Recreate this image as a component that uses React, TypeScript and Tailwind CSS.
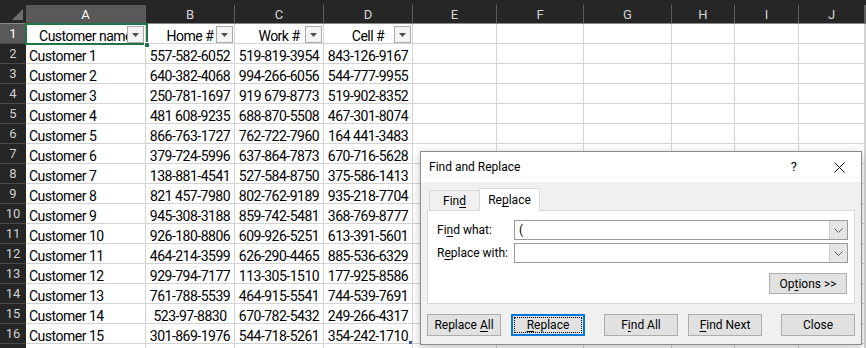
import React from 'react';

const COLS = ['A', 'B', 'C', 'D', 'E', 'F', 'G', 'H', 'I', 'J', ''];

const DATA: string[][] = [
  ['Customer name', 'Home #', 'Work #', 'Cell #'],
  ['Customer 1', '557-582-6052', '519-819-3954', '843-126-9167'],
  ['Customer 2', '640-382-4068', '994-266-6056', '544-777-9955'],
  ['Customer 3', '250-781-1697', '919 679-8773', '519-902-8352'],
  ['Customer 4', '481 608-9235', '688-870-5508', '467-301-8074'],
  ['Customer 5', '866-763-1727', '762-722-7960', '164 441-3483'],
  ['Customer 6', '379-724-5996', '637-864-7873', '670-716-5628'],
  ['Customer 7', '138-881-4541', '527-584-8750', '375-586-1413'],
  ['Customer 8', '821 457-7980', '802-762-9189', '935-218-7704'],
  ['Customer 9', '945-308-3188', '859-742-5481', '368-769-8777'],
  ['Customer 10', '926-180-8806', '609-926-5251', '613-391-5601'],
  ['Customer 11', '464-214-3599', '626-290-4465', '885-536-6329'],
  ['Customer 12', '929-794-7177', '113-305-1510', '177-925-8586'],
  ['Customer 13', '761-788-5539', '464-915-5541', '744-539-7691'],
  ['Customer 14', '523-97-8830', '670-782-5432', '249-266-4317'],
  ['Customer 15', '301-869-1976', '544-718-5261', '354-242-1710'],
  [],
];

const FilterButton = () => (
  <div className="absolute right-[1px] top-[2px] w-[17px] h-[17px] border border-[#ababab] bg-[#f4f4f4] flex items-center justify-center">
    <svg width="7" height="4" viewBox="0 0 7 4">
      <path d="M0 0h7L3.5 4z" fill="#505050" />
    </svg>
  </div>
);

const Chevron = () => (
  <svg width="9" height="5" viewBox="0 0 9 5" fill="none" stroke="#606060" strokeWidth="1">
    <path d="M0.5 0.5l4 4 4-4" />
  </svg>
);

const ComboInput = ({ value }: { value: string }) => (
  <div className="flex-1 h-[20px] border border-[#9a9a9a] bg-white flex">
    <div className="flex-1 pl-[4px] leading-[18px]">{value}</div>
    <div className="w-[18px] bg-[#e5e5e5] border-l border-[#cfcfcf] flex items-center justify-center">
      <Chevron />
    </div>
  </div>
);

const Btn = ({ children, className = '' }: { children: React.ReactNode; className?: string }) => (
  <div className={`w-[74px] h-[22px] border border-[#adadad] bg-[#e1e1e1] flex items-center justify-center ${className}`}>
    <span>{children}</span>
  </div>
);

export default function App() {
  return (
    <div className="relative w-[866px] h-[348px] overflow-hidden bg-[#262626] pt-[5px] font-[Roboto,sans-serif]">
      <div className="grid grid-cols-[26px_120px_89px_89px_89px_84px_87px_88px_63px_64px_66px_1fr]">
        {/* column headers */}
        <div className="h-[19px] border-b border-[#8a8a8a] flex items-end justify-end pr-[3px] pb-[3px]">
          <svg width="11" height="11" viewBox="0 0 11 11">
            <path d="M11 0v11H0z" fill="#6f6f6f" />
          </svg>
        </div>
        {COLS.map((c, i) => (
          <div
            key={c + i}
            className={`h-[19px] border-b border-r border-[#5e5e5e] border-b-[#8a8a8a] text-[13px] leading-[19px] text-center ${
              i === 0 ? 'bg-[#595959] text-white' : 'text-[#d6d6d6]'
            }`}
          >
            {c}
          </div>
        ))}

        {DATA.map((row, r) => (
          <React.Fragment key={r}>
            <div
              className={`h-5 border-b border-[#4a4a4a] text-[13px] leading-5 text-center ${
                r === 0 ? 'bg-[#595959] text-white' : 'text-[#d0d0d0]'
              }`}
            >
              {r < 16 ? r + 1 : ''}
            </div>
            {COLS.map((_, c) => {
              const v = row[c] ?? '';
              const isHead = r === 0 && c < 4;
              return (
                <div
                  key={c}
                  className={`relative h-5 bg-white border-r border-b border-[#d4d4d4] overflow-hidden whitespace-nowrap text-[14px] tracking-[-0.5px] leading-[24px] text-black ${
                    c === 0 && !isHead ? 'pl-[3px]' : 'text-center'
                  }`}
                >
                  {v}
                  {isHead && <FilterButton />}
                </div>
              );
            })}
          </React.Fragment>
        ))}
      </div>

      {/* selected cell A1 */}
      <div className="absolute left-[25px] top-[23px] w-[123px] h-[22px] border-2 border-[#217346]" />
      <div className="absolute left-[144px] top-[42px] w-[6px] h-[6px] bg-[#217346] border border-white" />
      {/* table resize handle */}
      <div className="absolute left-[409px] top-[341px] w-[3px] h-[3px] bg-[#3b5a9a]" />

      {/* Find and Replace dialog */}
      <div className="absolute left-[420px] top-[151px] w-[442px] h-[194px] border border-[#8c8c8c] bg-[#f0f0f0] flex flex-col text-[12px] text-black shadow-[0_2px_8px_rgba(0,0,0,0.25)]">
        <div className="h-[30px] bg-white flex items-center pl-[8px] pr-[16px]">
          <span>Find and Replace</span>
          <span className="ml-auto mr-[37px] text-[13px]">?</span>
          <svg width="11" height="11" viewBox="0 0 11 11" stroke="#111" strokeWidth="1">
            <path d="M0.5 0.5l10 10M10.5 0.5l-10 10" />
          </svg>
        </div>

        <div className="px-[6px] pt-[6px]">
          <div className="flex items-end h-[22px] pl-[2px]">
            <div className="w-[50px] h-[20px] border-t border-l border-[#d9d9d9] flex items-center justify-center">
              <span>
                Fin<u className="underline-offset-2">d</u>
              </span>
            </div>
            <div className="relative z-10 -mb-px w-[61px] h-[23px] bg-white border-t border-l border-r border-[#d9d9d9] flex items-center justify-center">
              <span>
                Re<u className="underline-offset-2">p</u>lace
              </span>
            </div>
          </div>

          <div className="h-[94px] border border-[#d9d9d9] bg-white pl-[9px] pr-[6px] pt-[9px]">
            <div className="flex items-center">
              <div className="w-[77px]">
                Fi<u className="underline-offset-2">n</u>d what:
              </div>
              <ComboInput value="(" />
            </div>
            <div className="flex items-center mt-[3px]">
              <div className="w-[77px]">
                R<u className="underline-offset-2">e</u>place with:
              </div>
              <ComboInput value="" />
            </div>
            <div className="flex justify-end mt-[10px] pr-[1px]">
              <div className="w-[78px] h-[21px] border border-[#adadad] bg-[#e1e1e1] flex items-center justify-center">
                <span>
                  Op<u className="underline-offset-2">t</u>ions &gt;&gt;
                </span>
              </div>
            </div>
          </div>

          <div className="flex mt-[10px]">
            <Btn>
              Replace <u className="underline-offset-2">A</u>ll
            </Btn>
            <div className="ml-[10px] w-[74px] h-[22px] border-2 border-[#0078d7] bg-[#e1e1e1] p-[1px]">
              <div className="w-full h-full border border-dotted border-black flex items-center justify-center">
                <span>
                  <u className="underline-offset-2">R</u>eplace
                </span>
              </div>
            </div>
            <Btn className="ml-[19px]">
              F<u className="underline-offset-2">i</u>nd All
            </Btn>
            <Btn className="ml-[10px]">
              <u className="underline-offset-2">F</u>ind Next
            </Btn>
            <Btn className="ml-[19px]">Close</Btn>
          </div>
        </div>
      </div>
    </div>
  );
}
